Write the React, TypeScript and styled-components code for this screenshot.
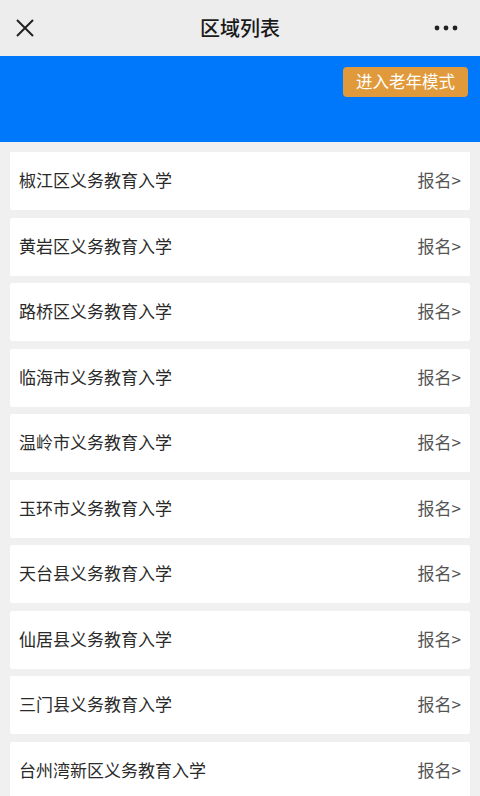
import styled, { createGlobalStyle } from "styled-components";

const GlobalStyle = createGlobalStyle`
  html, body {
    margin: 0;
    padding: 0;
    background: #f0f0f0;
    font-family: "Noto Sans CJK SC", "Noto Sans", sans-serif;
  }
`;

const Page = styled.div`
  width: 480px;
  min-height: 796px;
  background: #f0f0f0;
`;

const TopBar = styled.header`
  height: 56px;
  background: #ededed;
  display: grid;
  grid-template-columns: 60px 1fr 60px;
  align-items: center;
`;

const IconSlot = styled.div<{ $right?: boolean }>`
  display: flex;
  justify-content: ${(p) => (p.$right ? "flex-end" : "flex-start")};
  align-items: center;
  padding: ${(p) => (p.$right ? "0 22px 0 0" : "0 0 0 15px")};
`;

const Title = styled.h1`
  margin: 0;
  text-align: center;
  font-size: 20px;
  font-weight: 500;
  color: #1a1a1a;
  padding-bottom: 2px;
`;

const Banner = styled.div`
  height: 86px;
  background: #0078fc;
  display: flex;
  justify-content: flex-end;
  align-items: flex-start;
  padding: 11px 12px 0 0;
  box-sizing: border-box;
`;

const ElderButton = styled.button`
  border: none;
  background: #e09a3c;
  color: #fff;
  font-family: inherit;
  font-size: 16.5px;
  height: 30px;
  padding: 0 13px 2px;
  border-radius: 4px;
  line-height: 28px;
`;

const List = styled.ul`
  list-style: none;
  margin: 0;
  padding: 10px 10px 0;
  display: flex;
  flex-direction: column;
  gap: 7.5px;
`;

const Row = styled.li`
  height: 58px;
  box-sizing: border-box;
  background: #fff;
  display: flex;
  justify-content: space-between;
  align-items: center;
  padding: 0 9px 3px;
  border-radius: 2px;
`;

const Name = styled.span`
  font-size: 17px;
  color: #2a2a2a;
`;

const Action = styled.span`
  font-size: 17px;
  color: #555;
`;

const districts = [
  "椒江区义务教育入学",
  "黄岩区义务教育入学",
  "路桥区义务教育入学",
  "临海市义务教育入学",
  "温岭市义务教育入学",
  "玉环市义务教育入学",
  "天台县义务教育入学",
  "仙居县义务教育入学",
  "三门县义务教育入学",
  "台州湾新区义务教育入学",
];

const CloseIcon = () => (
  <svg width="20" height="20" viewBox="0 0 20 20">
    <path d="M2 2 L18 18 M18 2 L2 18" stroke="#222" strokeWidth="2" />
  </svg>
);

const MoreIcon = () => (
  <svg width="24" height="6" viewBox="0 0 24 6">
    <circle cx="3" cy="3" r="2.4" fill="#222" />
    <circle cx="12" cy="3" r="2.4" fill="#222" />
    <circle cx="21" cy="3" r="2.4" fill="#222" />
  </svg>
);

const App = () => (
  <Page>
    <GlobalStyle />
    <TopBar>
      <IconSlot>
        <CloseIcon />
      </IconSlot>
      <Title>区域列表</Title>
      <IconSlot $right>
        <MoreIcon />
      </IconSlot>
    </TopBar>
    <Banner>
      <ElderButton>进入老年模式</ElderButton>
    </Banner>
    <List>
      {districts.map((d) => (
        <Row key={d}>
          <Name>{d}</Name>
          <Action>报名&gt;</Action>
        </Row>
      ))}
    </List>
  </Page>
);

export default App;
